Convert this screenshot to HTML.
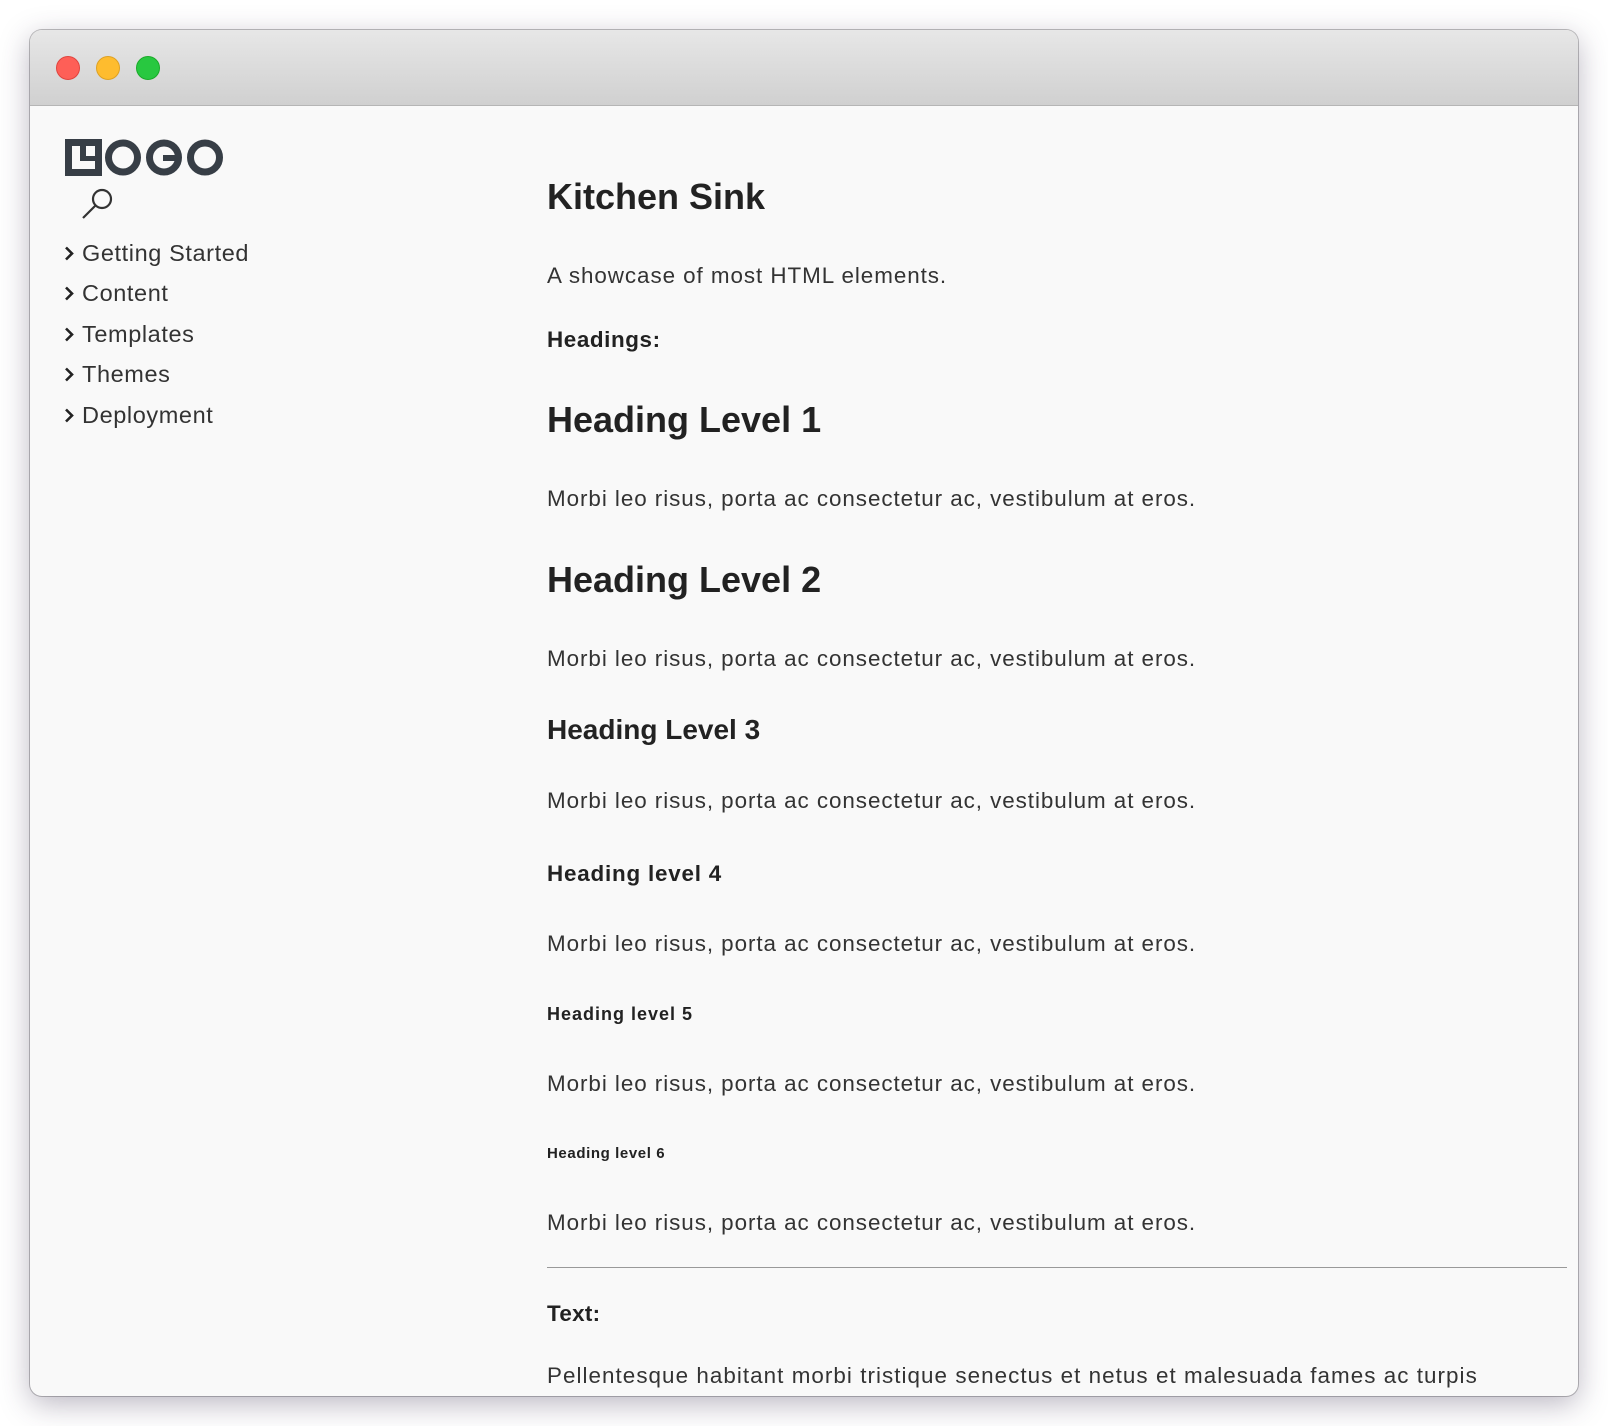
<!DOCTYPE html>
<html><head><meta charset="utf-8"><style>
html,body{margin:0;padding:0;background:#fff;width:1608px;height:1426px;overflow:hidden;font-family:"Liberation Sans",sans-serif;color:#222}
.win{position:absolute;left:30px;top:30px;width:1548px;height:1366px;border-radius:12px;background:#f9f9f9;box-shadow:0 8px 30px rgba(60,50,80,.35),0 0 0 1px rgba(0,0,0,.25);overflow:hidden}
.bar{position:absolute;left:0;top:0;right:0;height:75px;background:linear-gradient(#e7e7e7,#d0d0d0);border-bottom:1px solid #b5b5b5}
.dot{position:absolute;top:26px;width:24px;height:24px;border-radius:50%}
.t{position:absolute;white-space:nowrap;height:40px;line-height:40px}
.nav{left:34px;font-size:23.5px;letter-spacing:0.6px;color:#333}
.nav svg{position:absolute;left:0;top:13px}
.nav span{position:absolute;left:18px}
.c{left:517px}
.p{font-size:22.4px;color:#333;letter-spacing:0.95px}
.b{font-weight:bold;color:#222}
</style></head><body>
<div class="win">
<div class="bar">
<div class="dot" style="left:26px;background:#fe5f57;border:1px solid #e0443e;width:22px;height:22px"></div>
<div class="dot" style="left:66px;background:#febc2e;border:1px solid #dea123;width:22px;height:22px"></div>
<div class="dot" style="left:106px;background:#28c840;border:1px solid #1aab29;width:22px;height:22px"></div>
</div>
<svg style="position:absolute;left:35px;top:109px" width="160" height="37" viewBox="0 0 160 37">
<g fill="none" stroke="#373e46" stroke-width="7">
<rect x="3.5" y="3.5" width="30" height="30"/>
<circle cx="58" cy="18.5" r="14.5"/>
<circle cx="99" cy="18.5" r="14.5"/>
<circle cx="140" cy="18.5" r="14.5"/>
</g>
<rect x="15" y="0" width="6" height="20" fill="#373e46"/><rect x="15" y="17" width="18" height="5" fill="#373e46"/>
<rect x="98" y="16" width="16" height="6" fill="#373e46"/>
</svg>
<svg style="position:absolute;left:50px;top:157px" width="36" height="36" viewBox="0 0 36 36" fill="none" stroke="#333" stroke-width="2.2"><circle cx="22" cy="12" r="9"/><line x1="15.5" y1="18.5" x2="3" y2="31"/></svg>
<div class="t nav" style="top:203px;width:300px"><svg width="10" height="15" viewBox="0 0 10 15"><path d="M2 1.5 L8 7.5 L2 13.5" fill="none" stroke="#222" stroke-width="2.6"/></svg><span>Getting Started</span></div>
<div class="t nav" style="top:243px;width:300px"><svg width="10" height="15" viewBox="0 0 10 15"><path d="M2 1.5 L8 7.5 L2 13.5" fill="none" stroke="#222" stroke-width="2.6"/></svg><span>Content</span></div>
<div class="t nav" style="top:284px;width:300px"><svg width="10" height="15" viewBox="0 0 10 15"><path d="M2 1.5 L8 7.5 L2 13.5" fill="none" stroke="#222" stroke-width="2.6"/></svg><span>Templates</span></div>
<div class="t nav" style="top:324px;width:300px"><svg width="10" height="15" viewBox="0 0 10 15"><path d="M2 1.5 L8 7.5 L2 13.5" fill="none" stroke="#222" stroke-width="2.6"/></svg><span>Themes</span></div>
<div class="t nav" style="top:365px;width:300px"><svg width="10" height="15" viewBox="0 0 10 15"><path d="M2 1.5 L8 7.5 L2 13.5" fill="none" stroke="#222" stroke-width="2.6"/></svg><span>Deployment</span></div>

<div class="t c b" style="top:147px;font-size:36px">Kitchen Sink</div>
<div class="t c p" style="top:226px">A showcase of most HTML elements.</div>
<div class="t c b" style="top:290px;font-size:22.4px;letter-spacing:0.6px">Headings:</div>
<div class="t c b" style="top:370px;font-size:36px">Heading Level 1</div>
<div class="t c p" style="top:449px">Morbi leo risus, porta ac consectetur ac, vestibulum at eros.</div>
<div class="t c b" style="top:530px;font-size:36px">Heading Level 2</div>
<div class="t c p" style="top:609px">Morbi leo risus, porta ac consectetur ac, vestibulum at eros.</div>
<div class="t c b" style="top:680px;font-size:28px">Heading Level 3</div>
<div class="t c p" style="top:751px">Morbi leo risus, porta ac consectetur ac, vestibulum at eros.</div>
<div class="t c b" style="top:824px;font-size:22.4px;letter-spacing:0.8px">Heading level 4</div>
<div class="t c p" style="top:894px">Morbi leo risus, porta ac consectetur ac, vestibulum at eros.</div>
<div class="t c b" style="top:964px;font-size:18px;letter-spacing:1px">Heading level 5</div>
<div class="t c p" style="top:1034px">Morbi leo risus, porta ac consectetur ac, vestibulum at eros.</div>
<div class="t c b" style="top:1104px;font-size:15px;letter-spacing:0.6px">Heading level 6</div>
<div class="t c p" style="top:1173px">Morbi leo risus, porta ac consectetur ac, vestibulum at eros.</div>
<div style="position:absolute;left:517px;top:1237px;width:1020px;height:1px;background:#999"></div>
<div class="t c b" style="top:1264px;font-size:22.4px;letter-spacing:0.3px">Text:</div>
<div class="t c p" style="top:1326px;letter-spacing:1.05px">Pellentesque habitant morbi tristique senectus et netus et malesuada fames ac turpis</div>
</div>
</body></html>
